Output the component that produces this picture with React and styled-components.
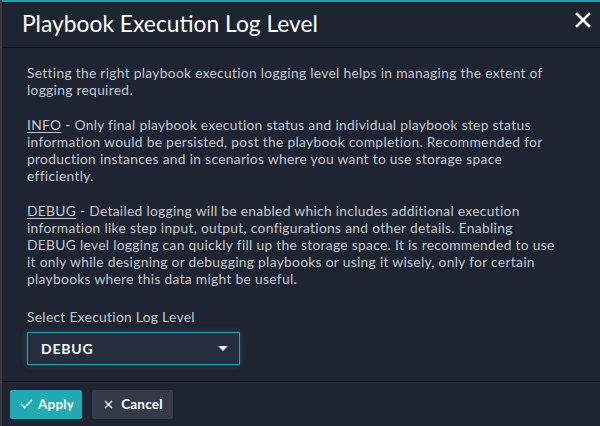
import styled, { createGlobalStyle } from "styled-components";

const GlobalStyle = createGlobalStyle`
  html, body {
    margin: 0;
    padding: 0;
    background: #3a3d43;
  }
  body {
    font-family: Lato, "Open Sans", sans-serif;
  }
`;

const Page = styled.div`
  display: flex;
  height: 426px;
  padding-left: 2px;
`;

const Dialog = styled.div`
  flex: 1;
  display: flex;
  flex-direction: column;
  background: #1e2431;
  border-top: 2px solid #1fa2ab;
`;

const Header = styled.header`
  display: flex;
  align-items: flex-start;
  justify-content: space-between;
  box-sizing: border-box;
  height: 46px;
  padding: 7px 9px 0 20px;
  border-bottom: 1px solid #111624;
`;

const Title = styled.h1`
  margin: 0;
  font-size: 22.8px;
  line-height: 28px;
  font-weight: 400;
  color: #ffffff;
`;

const CloseButton = styled.button`
  background: none;
  border: none;
  padding: 0;
  margin-top: 3px;
  width: 16px;
  height: 16px;
  display: flex;
  align-items: center;
  justify-content: center;
  cursor: pointer;
`;

const Body = styled.div`
  flex: 1;
  padding: 16px 40px 0 25px;
  color: #c4c8cf;
  font-size: 13.8px;
  line-height: 17px;
  letter-spacing: 0.3px;
`;

const Paragraph = styled.p`
  margin: 0 0 18px;
`;

const Term = styled.span`
  text-decoration: underline;
  text-underline-offset: 2px;
`;

const Label = styled.div`
  margin-top: 21px;
  margin-bottom: 7px;
`;

const Select = styled.div`
  width: 213px;
  height: 33px;
  box-sizing: border-box;
  display: flex;
  align-items: center;
  justify-content: space-between;
  padding: 0 11px 0 13px;
  border: 1px solid #20a4ae;
  background: #252e3e;
  box-shadow: 0 0 6px rgba(32, 164, 174, 0.35);
  color: #ffffff;
  font-weight: 700;
  font-size: 14px;
  letter-spacing: 0.8px;
`;

const Caret = styled.span`
  width: 0;
  height: 0;
  border-left: 5px solid transparent;
  border-right: 5px solid transparent;
  border-top: 5px solid #ffffff;
`;

const Footer = styled.footer`
  display: flex;
  align-items: center;
  gap: 10px;
  height: 44px;
  padding: 0 8px;
  border-top: 1px solid #111624;
`;

const Button = styled.button`
  display: flex;
  align-items: center;
  gap: ${(p) => (p.$primary ? "5px" : "8px")};
  height: 29px;
  padding: 0 ${(p) => (p.$primary ? "8px 0 10px" : "10px 0 12px")};
  border: none;
  border-radius: 2px;
  background: ${(p) => (p.$primary ? "#22a9b2" : "#343b48")};
  color: #ffffff;
  font-family: Lato, sans-serif;
  font-weight: 700;
  font-size: 13.5px;
  letter-spacing: 0.2px;
  cursor: pointer;
`;

export default function App() {
  return (
    <>
      <GlobalStyle />
      <Page>
        <Dialog>
          <Header>
            <Title>Playbook Execution Log Level</Title>
            <CloseButton aria-label="Close">
              <svg width="16" height="16" viewBox="0 0 16 16">
                <path d="M2 2 L14 14 M14 2 L2 14" stroke="#fff" strokeWidth="2.6" strokeLinecap="square" />
              </svg>
            </CloseButton>
          </Header>
          <Body>
            <Paragraph>
              Setting the right playbook execution logging level helps in managing the extent of logging required.
            </Paragraph>
            <Paragraph>
              <Term>INFO</Term> - Only final playbook execution status and individual playbook step status information
              would be persisted, post the playbook completion. Recommended for production instances and in scenarios
              where you want to use storage space efficiently.
            </Paragraph>
            <Paragraph>
              <Term>DEBUG</Term> - Detailed logging will be enabled which includes additional execution information
              like step input, output, configurations and other details. Enabling DEBUG level logging can quickly fill
              up the storage space. It is recommended to use it only while designing or debugging playbooks or using
              it wisely, only for certain playbooks where this data might be useful.
            </Paragraph>
            <Label>Select Execution Log Level</Label>
            <Select>
              DEBUG
              <Caret />
            </Select>
          </Body>
          <Footer>
            <Button $primary>
              <svg width="13" height="10" viewBox="0 0 13 10">
                <path d="M1 5 L4.5 8.5 L12 1" fill="none" stroke="#fff" strokeWidth="1.3" />
              </svg>
              Apply
            </Button>
            <Button>
              <svg width="9" height="9" viewBox="0 0 9 9">
                <path d="M1 1 L8 8 M8 1 L1 8" fill="none" stroke="#fff" strokeWidth="1.3" />
              </svg>
              Cancel
            </Button>
          </Footer>
        </Dialog>
      </Page>
    </>
  );
}
